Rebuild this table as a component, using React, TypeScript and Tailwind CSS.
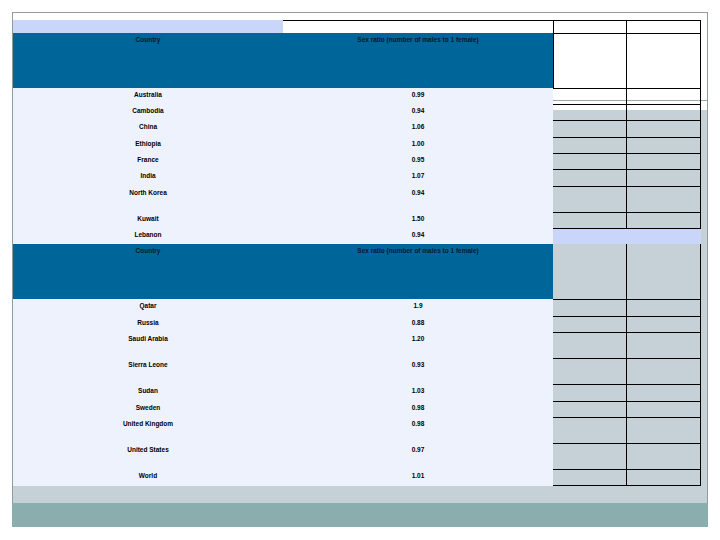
type Row = { name: string; value: string; h: number };

const groupOne: Row[] = [
  { name: "Australia", value: "0.99", h: 16 },
  { name: "Cambodia", value: "0.94", h: 16 },
  { name: "China", value: "1.06", h: 17 },
  { name: "Ethiopia", value: "1.00", h: 16 },
  { name: "France", value: "0.95", h: 16 },
  { name: "India", value: "1.07", h: 17 },
  { name: "North Korea", value: "0.94", h: 26 },
  { name: "Kuwait", value: "1.50", h: 16 },
];

const groupTwo: Row[] = [
  { name: "Qatar", value: "1.9", h: 17 },
  { name: "Russia", value: "0.88", h: 16 },
  { name: "Saudi Arabia", value: "1.20", h: 26 },
  { name: "Sierra Leone", value: "0.93", h: 26 },
  { name: "Sudan", value: "1.03", h: 17 },
  { name: "Sweden", value: "0.98", h: 16 },
  { name: "United Kingdom", value: "0.98", h: 26 },
  { name: "United States", value: "0.97", h: 26 },
  { name: "World", value: "1.01", h: 17 },
];

function HeaderCells() {
  return (
    <div className="flex w-[540px] bg-[#006699] text-[#0a1630]">
      <div className="w-[270px] pt-[3px] text-center">Country</div>
      <div className="w-[270px] pt-[3px] text-center">Sex ratio (number of males to 1 female)</div>
    </div>
  );
}

function DataRow({ row, last }: { row: Row; last?: boolean }) {
  return (
    <div className="flex" style={{ height: row.h }}>
      <div className="flex w-[540px] bg-[#eef2fd] text-black">
        <div className="w-[270px] pt-[3px] text-center">{row.name}</div>
        <div className="w-[270px] pt-[3px] text-center">{row.value}</div>
      </div>
      <div className={`w-[74px] border-t border-r border-black ${last ? "border-b" : ""}`} />
      <div className={`w-[74px] border-t border-r border-black ${last ? "border-b" : ""}`} />
    </div>
  );
}

export default function App() {
  return (
    <div className="h-[540px] w-[720px] overflow-hidden bg-white pt-[12px] pl-[12px] font-['Liberation_Sans',sans-serif] text-[6.5px] leading-[8px] font-bold">
      <div className="flex h-[515px] w-[696px] flex-col border-t border-l border-r border-[#8e9c9c] bg-[linear-gradient(to_bottom,#ffffff_87px,#9aa8a8_87px,#9aa8a8_88px,#ffffff_88px,#ffffff_97px,#c6d1d7_97px)] pt-[7px]">
        <div className="flex h-[466px] flex-col">
          {/* top strip */}
          <div className="flex h-[13px]">
            <div className="w-[270px] bg-[#c9d5f9]" />
            <div className="w-[270px] border-t border-black bg-white" />
            <div className="w-[74px] border-t border-r border-l border-black" />
            <div className="w-[74px] border-t border-r border-black" />
          </div>

          <div className="flex h-[55px]">
            <HeaderCells />
            <div className="w-[74px] border-t border-r border-l border-black" />
            <div className="w-[74px] border-t border-r border-black" />
          </div>

          {groupOne.map((row) => (
            <DataRow key={row.name} row={row} />
          ))}

          <div className="flex h-[16px]">
            <div className="flex w-[540px] bg-[#eef2fd] text-black">
              <div className="w-[270px] pt-[3px] text-center">Lebanon</div>
              <div className="w-[270px] pt-[3px] text-center">0.94</div>
            </div>
            <div className="w-[148px] border-t border-black bg-[#c9d5f9]" />
          </div>

          <div className="flex h-[55px]">
            <HeaderCells />
            <div className="w-[74px] border-r border-black" />
            <div className="w-[74px] border-r border-black" />
          </div>

          {groupTwo.map((row, i) => (
            <DataRow key={row.name} row={row} last={i === groupTwo.length - 1} />
          ))}
        </div>
        <div className="h-[17px]" />
        <div className="-ml-px h-[24px] w-[696px] bg-[#8aadad]" />
      </div>
    </div>
  );
}
